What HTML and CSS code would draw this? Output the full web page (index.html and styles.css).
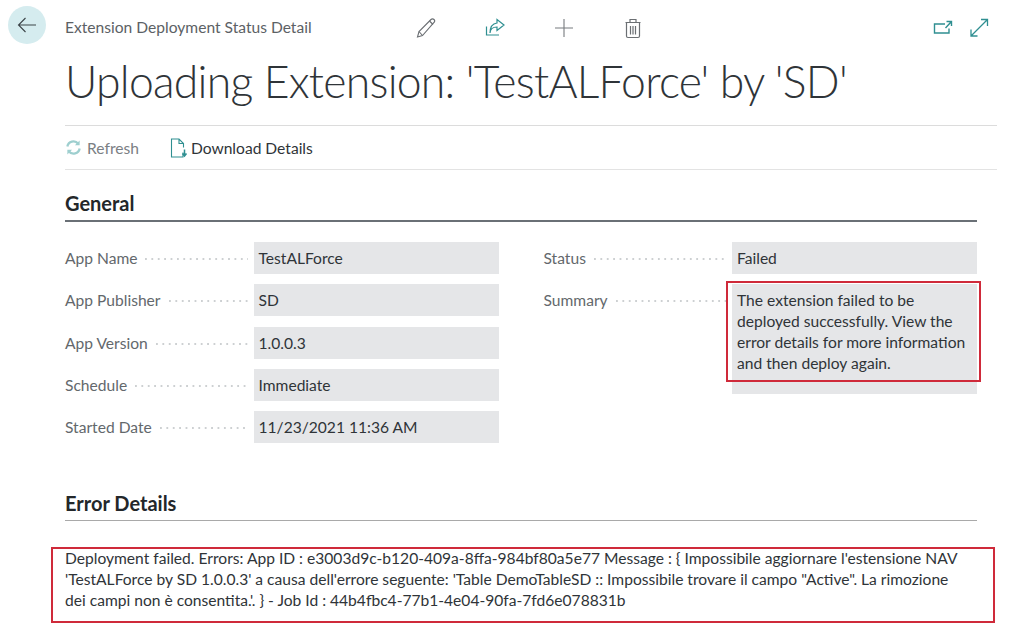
FILE: index.html
```html
<!DOCTYPE html>
<html lang="en">
<head>
<meta charset="utf-8">
<title>Extension Deployment Status Detail</title>
<link rel="stylesheet" href="styles.css">
</head>
<body>
<div class="page">
  <button class="back" aria-label="Back">
    <svg width="20" height="16" viewBox="0 0 20 16" fill="none" stroke="#3c4448" stroke-width="1.1"><path d="M19 8H1.5M8.5 1L1.5 8l7 7"/></svg>
  </button>
  <main class="main">
    <header class="head">
      <span class="crumb">Extension Deployment Status Detail</span>
      <div class="actions">
        <svg class="ico" viewBox="0 0 24 24" fill="none" stroke="#6b6f73" stroke-width="1.1"><path d="M3.500 21l1.500-5.500L17 3.500c.8-.8 2.200-.8 3 0s.8 2.200 0 3L8.500 19.500z"/><path d="M5 15.500l3.500 4M15.500 5l3.500 3.500"/></svg>
        <svg class="ico" viewBox="0 0 24 24" fill="none" stroke="#2f8f91" stroke-width="1.2"><path d="M3.500 10.500V19H16"/><path d="M7 17c.3-4 3-6 7-6v3.500L21 9l-7-5.500V7C10 7.500 7 11 7 17z"/></svg>
        <svg class="ico" viewBox="0 0 24 24" fill="none" stroke="#777b7f" stroke-width="1.1"><path d="M12 3v18M3 12h18"/></svg>
        <svg class="ico" viewBox="0 0 24 24" fill="none" stroke="#6b6f73" stroke-width="1.2"><path d="M5.500 7v13c0 1 .7 1.500 1.500 1.500h10c.8 0 1.500-.5 1.500-1.500V7M4.500 6.500h15M9 6V3.500h6V6M9.500 10v8.500M12 10v8.500M14.500 10v8.500"/></svg>
      </div>
      <div class="view">
        <svg class="ico" viewBox="0 0 24 24" fill="none" stroke="#2f8f91" stroke-width="1.4"><path d="M15 8H4.500v9H19v-4.500"/><path d="M15.500 12L21 6M16.500 5.500H21.500V10"/></svg>
        <svg class="ico" viewBox="0 0 24 24" fill="none" stroke="#2f8f91" stroke-width="1.300"><path d="M4.500 19.500L20 4M14 3.500h6.500V10M4 13.500v6.500h6.500"/></svg>
      </div>
    </header>
    <h1 class="title">Uploading Extension: 'TestALForce' by 'SD'</h1>
    <nav class="toolbar">
      <span class="tool tool-off">
        <svg class="tool-ico" viewBox="0 0 18 18" fill="none" stroke="#9ecfcf" stroke-width="2.400"><path d="M2.500 8a6.500 6.500 0 0 1 11.500-3M15.500 10a6.500 6.500 0 0 1-11.500 3"/><path d="M15.500 1.500v5h-5zM2.500 16.500v-5h5z" fill="#9ecfcf" stroke="none"/></svg>
        Refresh
      </span>
      <span class="tool tool-doc">
        <svg class="tool-ico-doc" viewBox="0 0 18 20" fill="none" stroke="#2f8f91" stroke-width="1.100"><path d="M13 14.500v4.500H1.500V1H9l4.500 4.500v4M9 1v4.500h4.500"/><path d="M14.500 11.500v6M12.500 15.500l2 2.500 2-2.500" stroke-width="1.500"/></svg>
        Download Details
      </span>
    </nav>
    <section class="section">
      <h2 class="sec-title">General</h2>
      <div class="grid">
        <div class="col">
          <div class="row"><span class="label">App Name</span><span class="leader"></span><span class="value">TestALForce</span></div>
          <div class="row"><span class="label">App Publisher</span><span class="leader"></span><span class="value">SD</span></div>
          <div class="row"><span class="label">App Version</span><span class="leader"></span><span class="value">1.0.0.3</span></div>
          <div class="row"><span class="label">Schedule</span><span class="leader"></span><span class="value">Immediate</span></div>
          <div class="row"><span class="label">Started Date</span><span class="leader"></span><span class="value">11/23/2021 11:36 AM</span></div>
        </div>
        <div class="col">
          <div class="row"><span class="label">Status</span><span class="leader"></span><span class="value">Failed</span></div>
          <div class="row"><span class="label">Summary</span><span class="leader"></span>
            <span class="value value-multi">The extension failed to be deployed successfully. View the error details for more information and then deploy again.<i class="mark"></i></span>
          </div>
        </div>
      </div>
    </section>
    <section class="section section-err">
      <h2 class="sec-title sec-title-light">Error Details</h2>
      <div class="error"><p class="error-text">Deployment failed. Errors: App ID : e3003d9c-b120-409a-8ffa-984bf80a5e77 Message : { Impossibile aggiornare l'estensione NAV 'TestALForce by SD 1.0.0.3' a causa dell'errore seguente: 'Table DemoTableSD :: Impossibile trovare il campo "Active". La rimozione dei campi non è consentita.'. } - Job Id : 44b4fbc4-77b1-4e04-90fa-7fd6e078831b</p></div>
    </section>
  </main>
</div>
</body>
</html>
```
FILE: styles.css
```css
* { box-sizing: border-box; }
html, body { margin: 0; height: 100%; background: #fff; overflow: hidden; }
body { font-family: Lato, "Open Sans", sans-serif; font-size: 15.6px; color: #2f3438; }
.page { display: flex; gap: 19px; padding: 6px 27px 0 8px; }
.back { flex: none; width: 38px; height: 38px; border: 0; padding: 0; border-radius: 50%; background: #d5ecef; display: flex; align-items: center; justify-content: center; }
.main { flex: 1; min-width: 0; }
.head { display: flex; align-items: center; height: 44px; }
.crumb { width: 349px; padding-bottom: 2px; color: #5c6165; }
.ico { width: 24px; height: 24px; display: block; }
.actions { display: flex; gap: 45px; }
.view { display: flex; gap: 13px; margin-left: auto; margin-right: 6px; }
.title { margin: 0; height: 76px; font-family: Lato, sans-serif; font-weight: 300; font-size: 44.500px; letter-spacing: -0.75px; line-height: 62px; color: #2f3438; border-bottom: 1px solid #dcdcdc; }
.toolbar { display: flex; gap: 31px; align-items: center; height: 44px; border-bottom: 1px solid #e3e3e3; }
.tool { display: flex; align-items: center; gap: 5px; }
.tool-doc { gap: 3px; }
.tool-off { color: #7b8084; }
.tool-ico { width: 17px; height: 17px; }
.tool-ico-doc { width: 18px; height: 20px; }
.section { margin-right: 20px; }
.sec-title { margin: 0; padding-top: 20px; height: 52px; font-size: 20px; line-height: 26px; font-weight: 700; color: #23272a; border-bottom: 2px solid #6a7076; }
.grid { display: grid; grid-template-columns: 1fr 1fr; column-gap: 45px; padding-top: 20px; }
.row { display: flex; align-items: flex-start; height: 42.3px; }
.label { line-height: 32px; color: #63686c; white-space: nowrap; }
.leader { flex: 1; height: 2px; margin: 16px 6px 0 8px; background: radial-gradient(circle at 1px 1px, #cdd0d2 0.8px, transparent 1px) 0 0 / 6.4px 2px repeat-x; }
.value { flex: none; width: 245px; height: 32px; padding: 0 5px; background: #e5e6e8; line-height: 32px; }
.value-multi { position: relative; height: 110px; padding-top: 6px; line-height: 21px; }
.mark { position: absolute; left: -6px; right: -4px; top: -3px; height: 101px; border: 2px solid #cf2a3a; }
.section-err { margin-top: 37px; }
.sec-title-light { padding-top: 0; height: 31px; border-bottom-width: 1px; border-bottom-color: #a9a9a9; }
.error { margin: 26px -18px 0 -14px; padding: 0 28px 0 12px; height: 76px; border: 2px solid #cf2a3a; }
.error-text { margin: -1px 0 0; line-height: 21px; }
```
